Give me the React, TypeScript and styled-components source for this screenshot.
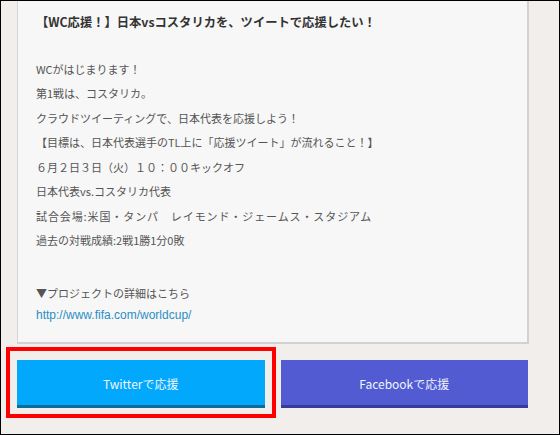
import React from "react";
import styled, { createGlobalStyle } from "styled-components";

const GlobalStyle = createGlobalStyle`
  html, body {
    margin: 0;
    padding: 0;
    background: #f1eeeb;
  }
  * {
    box-sizing: border-box;
  }
`;

const Frame = styled.div`
  width: 560px;
  height: 435px;
  overflow: hidden;
  border: 1px solid #000;
  background: #f1eeeb;
  padding: 0 30px 0 16px;
  font-family: "Noto Sans CJK JP", "Liberation Sans", sans-serif;
`;

const Card = styled.div`
  background: #f7f7f7;
  border-left: 1px solid #d6d6d6;
  border-right: 2px solid #d2d2d2;
  border-bottom: 2px solid #d2d2d2;
  padding: 9px 18px 16px;
  color: #555;
  font-size: 11px;
`;

const Title = styled.p`
  margin: 0;
  font-size: 12.3px;
  font-weight: bold;
  line-height: 24.5px;
  color: #333;
`;

const Body = styled.div`
  margin-top: 22px;
`;

const Line = styled.p<{ $wide?: boolean }>`
  margin: 0;
  line-height: 24.5px;
  letter-spacing: ${(p) => (p.$wide ? "0.9px" : "0")};
`;

const Detail = styled.p`
  margin: 29px 0 0;
  line-height: 22px;
`;

const Link = styled.a`
  display: block;
  line-height: 22px;
  font-family: "Liberation Sans", sans-serif;
  font-size: 12px;
  color: #2b8ec4;
  text-decoration: none;
`;

const ButtonRow = styled.div`
  display: grid;
  grid-template-columns: 1fr 1fr;
  gap: 16px;
  margin-top: 16px;
  padding-right: 1px;
`;

const Slot = styled.div`
  position: relative;
`;

const Highlight = styled.div`
  position: absolute;
  top: -13px;
  left: -11px;
  right: -11px;
  bottom: -10px;
  border: 4px solid #ff0000;
  pointer-events: none;
`;

const ShareButton = styled.button<{ $bg: string; $edge: string }>`
  display: flex;
  align-items: center;
  justify-content: center;
  width: 100%;
  height: 48px;
  border: none;
  border-bottom: 3px solid ${(p) => p.$edge};
  background: ${(p) => p.$bg};
  color: #eef6ff;
  font-family: inherit;
  font-size: 12px;
  padding: 3px 0 0;
  cursor: pointer;
`;

const lines = [
  { text: "WCがはじまります！" },
  { text: "第1戦は、コスタリカ。" },
  { text: "クラウドツイーティングで、日本代表を応援しよう！" },
  { text: "【目標は、日本代表選手のTL上に「応援ツイート」が流れること！】" },
  { text: "６月２日３日（火）１０：００キックオフ" },
  { text: "日本代表vs.コスタリカ代表" },
  { text: "試合会場:米国・タンパ　レイモンド・ジェームス・スタジアム", wide: true },
  { text: "過去の対戦成績:2戦1勝1分0敗" },
];

const App = () => {
  return (
    <>
      <GlobalStyle />
      <Frame>
        <Card>
          <Title>【WC応援！】日本vsコスタリカを、ツイートで応援したい！</Title>
          <Body>
            {lines.map((line) => (
              <Line key={line.text} $wide={line.wide}>
                {line.text}
              </Line>
            ))}
          </Body>
          <Detail>▼プロジェクトの詳細はこちら</Detail>
          <Link href="#">http://www.fifa.com/worldcup/</Link>
        </Card>
        <ButtonRow>
          <Slot>
            <ShareButton $bg="#02a8fb" $edge="#0b6c9c">
              Twitterで応援
            </ShareButton>
            <Highlight />
          </Slot>
          <Slot>
            <ShareButton $bg="#525bd2" $edge="#373c9a">
              Facebookで応援
            </ShareButton>
          </Slot>
        </ButtonRow>
      </Frame>
    </>
  );
};

export default App;
